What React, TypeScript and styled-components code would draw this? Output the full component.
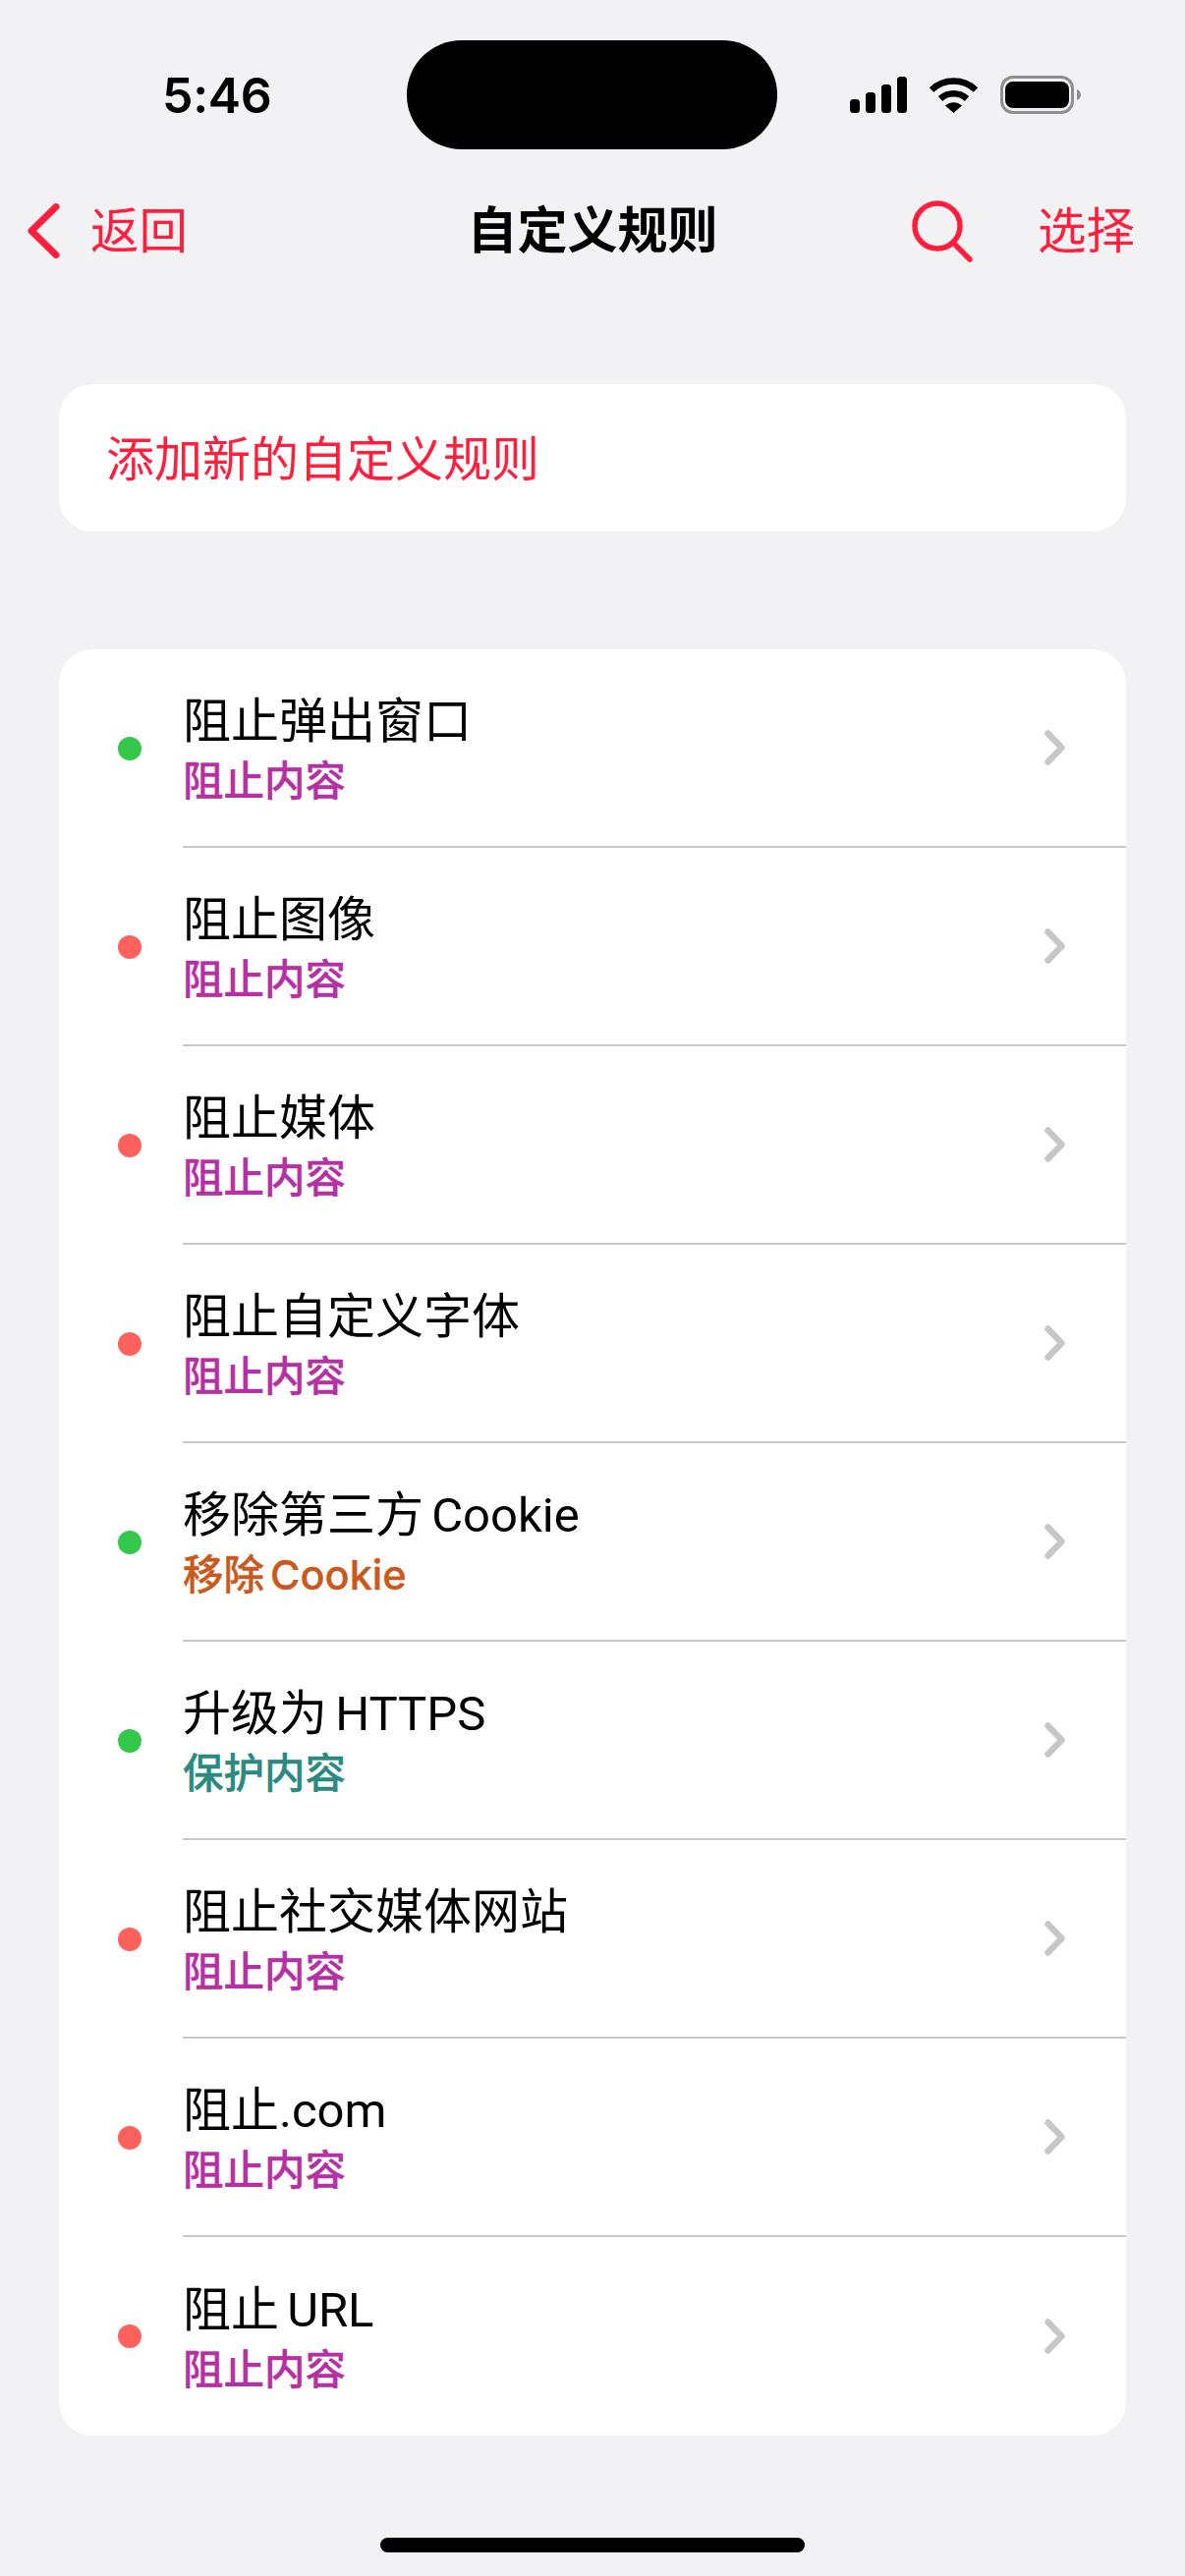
import React from "react";
import styled, { createGlobalStyle } from "styled-components";

const Global = createGlobalStyle`
  html, body { margin: 0; padding: 0; background: #f2f2f5; }
  body { font-family: Roboto, "Noto Sans CJK SC", sans-serif; }
`;

const RED = "#ff1f3d";

const Page = styled.div`
  width: 1206px;
  height: 2622px;
  overflow: hidden;
  background: #f2f2f5;
  color: #000;
`;

const StatusBar = styled.header`
  display: grid;
  grid-template-columns: 414px 377px 1fr;
  height: 111px;
  padding-top: 41px;
  align-items: center;
`;

const Time = styled.div`
  padding-left: 165px;
  font-family: Inter, sans-serif;
  font-size: 50px;
  font-weight: 600;
  line-height: 60px;
  letter-spacing: -0.3px;
`;

const Island = styled.div`
  height: 111px;
  border-radius: 56px / 55px;
  background: #000;
`;

const Indicators = styled.div`
  display: flex;
  align-items: center;
  gap: 22px;
  padding-left: 74px;
`;

const NavBar = styled.nav`
  display: grid;
  grid-template-columns: 1fr auto 1fr;
  align-items: center;
  height: 84px;
  margin-top: 41px;
`;

const NavLeft = styled.div`
  display: flex;
  align-items: center;
  gap: 31px;
  padding-left: 28px;
`;

const NavRight = styled.div`
  display: flex;
  align-items: center;
  justify-content: flex-end;
  gap: 66px;
  padding-right: 51px;
`;

const NavAction = styled.span`
  padding-top: 2px;
  font-size: 49.5px;
  line-height: 60px;
  color: ${RED};
`;

const NavTitle = styled.h1`
  margin: 0;
  padding-top: 2px;
  font-size: 51px;
  line-height: 60px;
  font-weight: 600;
`;

const Card = styled.section`
  margin: 0 60px;
  background: #fff;
  border-radius: 34px;
  overflow: hidden;
`;

const AddCard = styled(Card)`
  display: flex;
  align-items: center;
  box-sizing: border-box;
  height: 150px;
  margin-top: 114px;
  padding: 0 0 5px 48px;
  font-size: 49px;
  color: ${RED};
`;

const ListCard = styled(Card)`
  margin-top: 120px;
`;

const Row = styled.div`
  display: flex;
  align-items: center;
  height: 202px;
  padding-left: 60px;
`;

const Dot = styled.span<{ $on: boolean }>`
  flex: none;
  width: 24px;
  height: 24px;
  border-radius: 50%;
  margin-right: 42px;
  background: ${(p) => (p.$on ? "#34c84a" : "#ff625c")};
`;

const RowBody = styled.div<{ $last: boolean }>`
  flex: 1;
  display: flex;
  align-items: center;
  justify-content: space-between;
  box-sizing: border-box;
  height: 100%;
  padding-right: 62px;
  border-bottom: ${(p) => (p.$last ? "none" : "2px solid #c8c8ca")};
`;

const RowText = styled.div`
  display: flex;
  flex-direction: column;
`;

const RowTitle = styled.div`
  font-size: 49px;
  line-height: 68px;
  word-spacing: -4px;
`;

const RowKind = styled.div<{ $color: string }>`
  font-family: Inter, "Noto Sans CJK SC", sans-serif;
  font-size: 41.5px;
  line-height: 52px;
  font-weight: 500;
  word-spacing: -5px;
  -webkit-text-stroke: 0.35px ${(p) => p.$color};
  color: ${(p) => p.$color};
`;

const HomeBar = styled.div`
  width: 432px;
  height: 15px;
  margin: 104px auto 0;
  border-radius: 8px;
  background: #000;
`;

const Signal = () => (
  <svg width="58" height="37" viewBox="0 0 58 37" fill="#000">
    <rect x="0" y="23" width="10" height="14" rx="3.5" />
    <rect x="16" y="16" width="10" height="21" rx="3.5" />
    <rect x="32" y="8" width="10" height="29" rx="3.5" />
    <rect x="48" y="0" width="10" height="37" rx="3.5" />
  </svg>
);

const Wifi = () => (
  <svg width="51" height="37" viewBox="0 0 51 37" fill="none" stroke="#000" strokeWidth="6.5">
    <path d="M3 13.5C15.5 1.5 35.5 1.5 48 13.5" />
    <path d="M12 22.5C19.5 15.5 31.5 15.5 39 22.5" />
    <path d="M17 29.5L25.5 37L34 29.5C29 25 22 25 17 29.5Z" fill="#000" stroke="none" />
  </svg>
);

const Battery = () => (
  <svg width="82" height="39" viewBox="0 0 82 39">
    <rect x="1.5" y="1.5" width="72" height="36" rx="11.5" fill="none" stroke="#8e8e8e" strokeWidth="3" />
    <rect x="5" y="6" width="65" height="27" rx="8" fill="#000" />
    <path d="M78 14C80.5 15 82 17 82 19.5C82 22 80.5 24 78 25Z" fill="#8e8e8e" />
  </svg>
);

const BackChevron = () => (
  <svg width="33" height="56" viewBox="0 0 33 56" fill="none" stroke={RED} strokeWidth="7" strokeLinecap="round" strokeLinejoin="round">
    <path d="M29 3.5L4 28L29 52.5" />
  </svg>
);

const SearchIcon = () => (
  <svg width="62" height="63" viewBox="0 0 62 63" fill="none" stroke={RED} strokeWidth="5.5" strokeLinecap="round">
    <circle cx="26" cy="26" r="23" />
    <path d="M42 43L59 60" />
  </svg>
);

const RowChevron = () => (
  <svg width="21" height="36" viewBox="0 0 21 36" fill="none" stroke="#c7c7c7" strokeWidth="6.5" strokeLinecap="round" strokeLinejoin="round">
    <path d="M3.5 3.5L17.5 18L3.5 32.5" />
  </svg>
);

const PURPLE = "#b530a3";
const ORANGE = "#c85a1e";
const TEAL = "#2a8a80";

const rules = [
  { title: "阻止弹出窗口", kind: "阻止内容", color: PURPLE, on: true },
  { title: "阻止图像", kind: "阻止内容", color: PURPLE, on: false },
  { title: "阻止媒体", kind: "阻止内容", color: PURPLE, on: false },
  { title: "阻止自定义字体", kind: "阻止内容", color: PURPLE, on: false },
  { title: "移除第三方 Cookie", kind: "移除 Cookie", color: ORANGE, on: true },
  { title: "升级为 HTTPS", kind: "保护内容", color: TEAL, on: true },
  { title: "阻止社交媒体网站", kind: "阻止内容", color: PURPLE, on: false },
  { title: "阻止.com", kind: "阻止内容", color: PURPLE, on: false },
  { title: "阻止 URL", kind: "阻止内容", color: PURPLE, on: false },
];

export default function App() {
  return (
    <Page>
      <Global />
      <StatusBar>
        <Time>5:46</Time>
        <Island />
        <Indicators>
          <Signal />
          <Wifi />
          <Battery />
        </Indicators>
      </StatusBar>
      <NavBar>
        <NavLeft>
          <BackChevron />
          <NavAction>返回</NavAction>
        </NavLeft>
        <NavTitle>自定义规则</NavTitle>
        <NavRight>
          <SearchIcon />
          <NavAction>选择</NavAction>
        </NavRight>
      </NavBar>
      <AddCard>添加新的自定义规则</AddCard>
      <ListCard>
        {rules.map((r, i) => (
          <Row key={r.title}>
            <Dot $on={r.on} />
            <RowBody $last={i === rules.length - 1}>
              <RowText>
                <RowTitle>{r.title}</RowTitle>
                <RowKind $color={r.color}>{r.kind}</RowKind>
              </RowText>
              <RowChevron />
            </RowBody>
          </Row>
        ))}
      </ListCard>
      <HomeBar />
    </Page>
  );
}
